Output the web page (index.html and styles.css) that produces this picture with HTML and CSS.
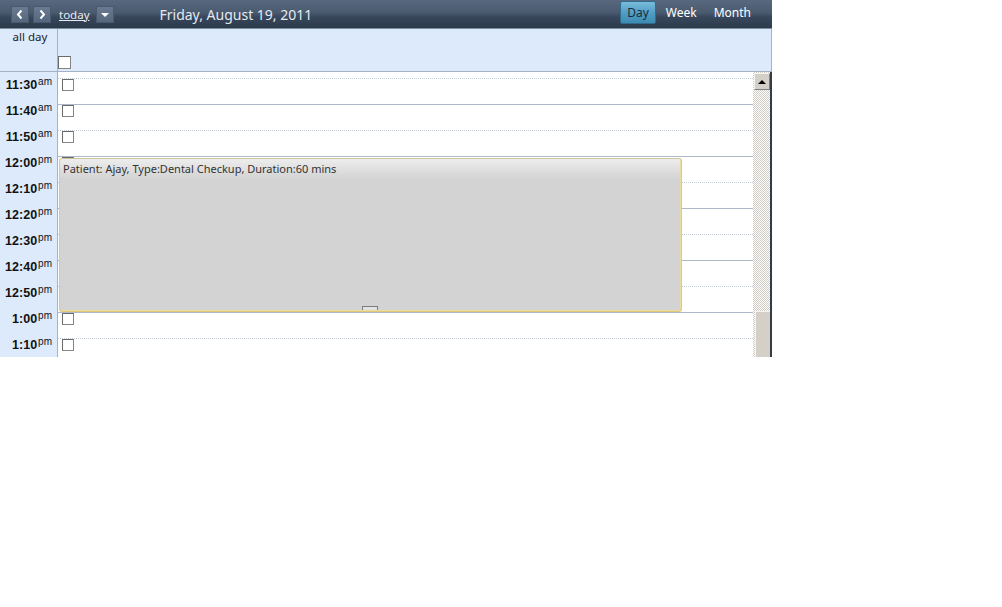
FILE: index.html
```html
<!DOCTYPE html>
<html lang="en">
<head>
    <meta charset="UTF-8">
    <title>Schedule - Day</title>
    <link rel="stylesheet" href="styles.css">
</head>
<body>
    <div class="calendar">
        <div class="toolbar">
            <div class="nav">
                <span class="nav-btn">
                    <svg width="18" height="17" viewBox="0 0 18 17"><path d="M10.5 4.5 L7 8.5 L10.5 12.5" fill="none" stroke="#fff" stroke-width="2"/></svg>
                </span>
                <span class="nav-btn">
                    <svg width="18" height="17" viewBox="0 0 18 17"><path d="M7.5 4.5 L11 8.5 L7.5 12.5" fill="none" stroke="#fff" stroke-width="2"/></svg>
                </span>
                <a class="today" href="#">today</a>
                <span class="nav-btn dd">
                    <svg width="18" height="17" viewBox="0 0 18 17"><polygon points="5,7 13,7 9,11" fill="#fff"/></svg>
                </span>
            </div>
            <div class="title">Friday, August 19, 2011</div>
            <div class="views">
                <span class="view active">Day</span>
                <span class="view">Week</span>
                <span class="view">Month</span>
            </div>
        </div>

        <div class="allday">
            <div class="axis">all day</div>
            <div class="allday-cell"><span class="chk"></span></div>
        </div>

        <div class="grid">
            <div class="slots">
                <div class="slot partial"><div class="time"></div><div class="cell dotted"></div></div>
                <div class="slot"><div class="time">11:30<sup>am</sup></div><div class="cell"><span class="chk"></span></div></div>
                <div class="slot"><div class="time">11:40<sup>am</sup></div><div class="cell dotted"><span class="chk"></span></div></div>
                <div class="slot"><div class="time">11:50<sup>am</sup></div><div class="cell"><span class="chk"></span></div></div>
                <div class="slot"><div class="time">12:00<sup>pm</sup></div><div class="cell dotted"><span class="chk"></span></div></div>
                <div class="slot"><div class="time">12:10<sup>pm</sup></div><div class="cell"><span class="chk"></span></div></div>
                <div class="slot"><div class="time">12:20<sup>pm</sup></div><div class="cell dotted"><span class="chk"></span></div></div>
                <div class="slot"><div class="time">12:30<sup>pm</sup></div><div class="cell"><span class="chk"></span></div></div>
                <div class="slot"><div class="time">12:40<sup>pm</sup></div><div class="cell dotted"><span class="chk"></span></div></div>
                <div class="slot"><div class="time">12:50<sup>pm</sup></div><div class="cell"><span class="chk"></span></div></div>
                <div class="slot"><div class="time">1:00<sup>pm</sup></div><div class="cell dotted"><span class="chk"></span></div></div>
                <div class="slot"><div class="time">1:10<sup>pm</sup></div><div class="cell"><span class="chk"></span></div></div>

                <!-- appointment block, 12:00 - 1:00 -->
                <div class="event">
                    <div class="event-title">Patient: Ajay, Type:Dental Checkup, Duration:60 mins</div>
                    <div class="resize"></div>
                </div>
            </div>
            <div class="scrollbar">
                <div class="sb-up"><span class="arrow"></span></div>
                <div class="sb-track"></div>
                <div class="sb-thumb"></div>
            </div>
        </div>
    </div>
</body>
</html>
```

FILE: styles.css
```css
* {
    margin: 0;
    padding: 0;
    box-sizing: border-box;
}

body {
    background: #fff;
    font-family: "Noto Sans", sans-serif;
}

.calendar {
    width: 772px;
}

/* top bar */
.toolbar {
    height: 29px;
    display: flex;
    align-items: center;
    background: linear-gradient(#58697f, #4a5a6f 45%, #38475c 60%, #2c3a4c);
    border-bottom: 1px solid #7d8ca1;
    padding-left: 11px;
    padding-right: 14px;
}

.nav {
    display: flex;
    align-items: center;
    height: 17px;
}

.nav-btn {
    display: block;
    width: 18px;
    height: 17px;
    background: linear-gradient(#6a7b91, #56677d);
    border: 1px solid #4a5a6e;
    margin-right: 4px;
}

.nav-btn svg {
    display: block;
    margin: -1px;
}

.today {
    color: #e6ecf3;
    font-size: 11.5px;
    margin: 0 6px 0 4px;
    text-decoration: underline;
}

.title {
    color: #e4e9ef;
    font-size: 14px;
    margin-left: 42px;
    flex: 1;
}

.views {
    display: flex;
    gap: 3px;
    align-self: flex-start;
    margin-top: 1px;
}

.view {
    color: #fff;
    font-size: 12px;
    height: 23px;
    line-height: 21px;
    padding: 0 6px;
    border: 1px solid transparent;
    border-radius: 2px;
}

.view.active {
    color: #1c2b3a;
    background: linear-gradient(#79bbd9, #4f9cc2 55%, #3d8ab3);
    border-color: #2f6c8e;
}

/* all-day strip */
.allday {
    display: flex;
    height: 43px;
    background: #dceafc;
    border-bottom: 1px solid #a4b2c5;
    border-right: 1px solid #a4b2c5;
}

.axis {
    width: 58px;
    border-right: 1px solid #a4b2c5;
    text-align: center;
    font-size: 11.5px;
    color: #222;
    padding: 0 0 0 3px;
}

.allday-cell {
    flex: 1;
    display: flex;
    align-items: flex-end;
    padding-bottom: 2px;
}

.allday-cell .chk {
    width: 13px;
    height: 13px;
}

.chk {
    display: block;
    width: 12px;
    height: 12px;
    background: #fff;
    border: 1px solid #858585;
    border-top-color: #6a6a6a;
    border-left-color: #6a6a6a;
}

/* time slots */
.grid {
    display: flex;
    height: 285px;
}

.slots {
    position: relative;
    width: 753px;
    overflow: hidden;
}

.slot {
    display: flex;
    height: 26px;
}

.slot.partial {
    height: 7px;
}

.time {
    width: 58px;
    background: #dceafc;
    border-right: 1px solid #a4b2c5;
    text-align: right;
    padding-right: 5px;
    font-family: "Liberation Sans", Arial, sans-serif;
    font-weight: bold;
    font-size: 12.5px;
    color: #111;
    line-height: 12px;
}

.time sup {
    font-weight: normal;
    font-size: 10px;
    line-height: 0;
    vertical-align: 4px;
    margin-left: 1px;
}

.cell {
    flex: 1;
    background: #fff;
    border-bottom: 1px solid #aeb8c6;
    padding: 0 0 0 4px;
}

.cell.dotted {
    border-bottom: 1px dotted #c4ccd6;
}

/* appointment */
.event {
    position: absolute;
    top: 86px;
    left: 59px;
    width: 623px;
    height: 154px;
    background: linear-gradient(#ededed, #d3d3d3 20px);
    border: 1px solid #e0c977;
    border-top-color: #cfc59a;
    border-radius: 3px;
    box-shadow: inset -1px -1px 0 #eadb9e;
}

.event-title {
    font-size: 11px;
    color: #333;
    padding: 2px 0 0 3px;
}

.resize {
    position: absolute;
    left: 302px;
    bottom: 1px;
    width: 16px;
    height: 4px;
    background: #e2e2e2;
    border: 1px solid #7c7c7c;
    border-bottom: none;
}

/* scrollbar */
.scrollbar {
    width: 19px;
    display: flex;
    flex-direction: column;
    border-right: 2px solid #333d4a;
    background: repeating-conic-gradient(#cfcbc3 0 25%, #fff 0 50%) 0 0 / 2px 2px;
}

.sb-up {
    height: 17px;
    margin: 1px 0 0 1px;
    background: #d4d0c8;
    border: 1px solid #808080;
    border-top-color: #f4f3ef;
    border-left-color: #f4f3ef;
    display: flex;
    align-items: center;
    justify-content: center;
}

.arrow {
    width: 0;
    height: 0;
    border-left: 4px solid transparent;
    border-right: 4px solid transparent;
    border-bottom: 4px solid #000;
}

.sb-track {
    height: 221px;
}

.sb-thumb {
    flex: 1;
    margin-left: 2px;
    background: #d4d0c8;
    border-left: 1px solid #f4f3ef;
    border-top: 1px solid #f4f3ef;
}
```
